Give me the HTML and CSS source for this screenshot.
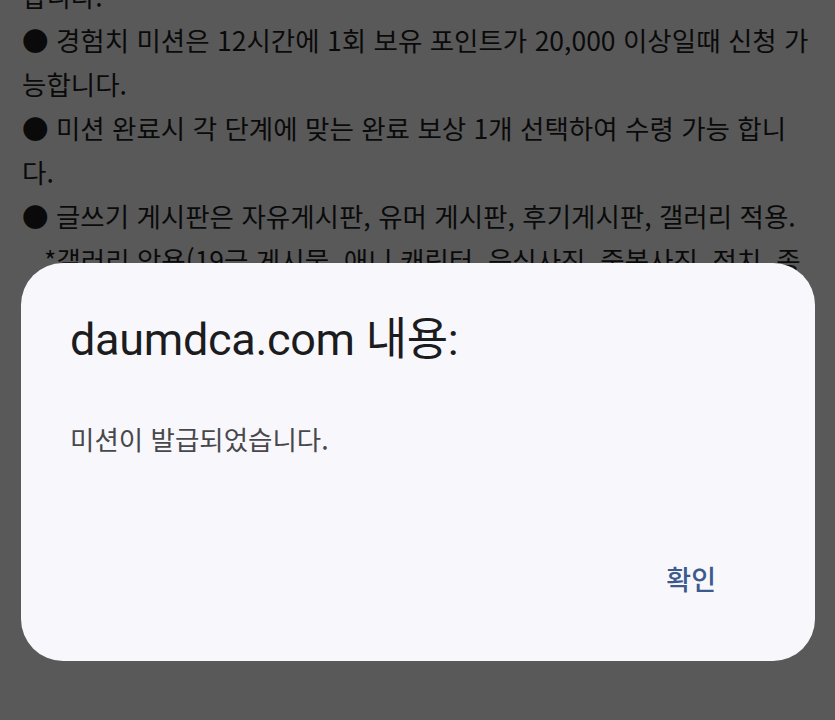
FILE: index.html
```html
<!DOCTYPE html>
<html lang="ko">
<head>
<meta charset="utf-8">
<title>daumdca.com</title>
<link rel="stylesheet" href="styles.css">
</head>
<body>
<div class="page">
  <p class="line">합니다.</p>
  <p class="line">● 경험치 미션은 12시간에 1회 보유 포인트가 20,000 이상일때 신청 가</p>
  <p class="line">능합니다.</p>
  <p class="line">● 미션 완료시 각 단계에 맞는 완료 보상 1개 선택하여 수령 가능 합니</p>
  <p class="line">다.</p>
  <p class="line">● 글쓰기 게시판은 자유게시판, 유머 게시판, 후기게시판, 갤러리 적용.</p>
  <p class="line indent">*갤러리 악용(19금 게시물, 애니 캐릭터, 음식사진, 중복사진, 정치, 종</p>
  <p class="line">교 등 게시물은 경험치 미션에서 제외됩니다.</p>
</div>
<div class="overlay"></div>
<div class="dialog" role="alertdialog">
  <h1 class="dialog-title">daumdca.com 내용:</h1>
  <p class="dialog-message">미션이 발급되었습니다.</p>
  <div class="dialog-actions">
    <button class="dialog-btn" type="button">확인</button>
  </div>
</div>
</body>
</html>
```
FILE: styles.css
```css
html, body {
  margin: 0;
  padding: 0;
  background: #ffffff;
  overflow: hidden;
  height: 100%;
}

.page {
  margin-top: -26px;
  padding: 0 22px;
  font-family: "Noto Sans CJK KR", "Noto Sans", sans-serif;
  font-size: 26.5px;
  color: #1f1f1f;
}

.line {
  margin: 0;
  height: 44px;
  line-height: 44px;
  white-space: nowrap;
}

.indent {
  padding-left: 22px;
}

.overlay {
  position: fixed;
  inset: 0;
  background: rgba(0, 0, 0, 0.65);
}

.dialog {
  position: fixed;
  left: 21px;
  top: 263px;
  width: 794px;
  height: 398px;
  box-sizing: border-box;
  background: #f8f8fc;
  border-radius: 42px;
  padding: 50px 99px 0 49px;
  display: flex;
  flex-direction: column;
}

.dialog-title {
  margin: 0;
  font-family: Roboto, "Noto Sans CJK KR", sans-serif;
  font-weight: 400;
  font-size: 45px;
  line-height: 54px;
  color: #1c1c1e;
  letter-spacing: -0.3px;
}

.dialog-message {
  margin: 56px 0 0;
  font-family: "Noto Sans CJK KR", Roboto, sans-serif;
  font-size: 26.5px;
  line-height: 32px;
  color: #48484c;
}

.dialog-actions {
  margin-top: 108px;
  display: flex;
  justify-content: flex-end;
}

.dialog-btn {
  border: none;
  background: none;
  padding: 0;
  font-family: "Noto Sans CJK KR", Roboto, sans-serif;
  font-weight: 500;
  font-size: 27px;
  line-height: 32px;
  color: #3d5a8e;
}
```
